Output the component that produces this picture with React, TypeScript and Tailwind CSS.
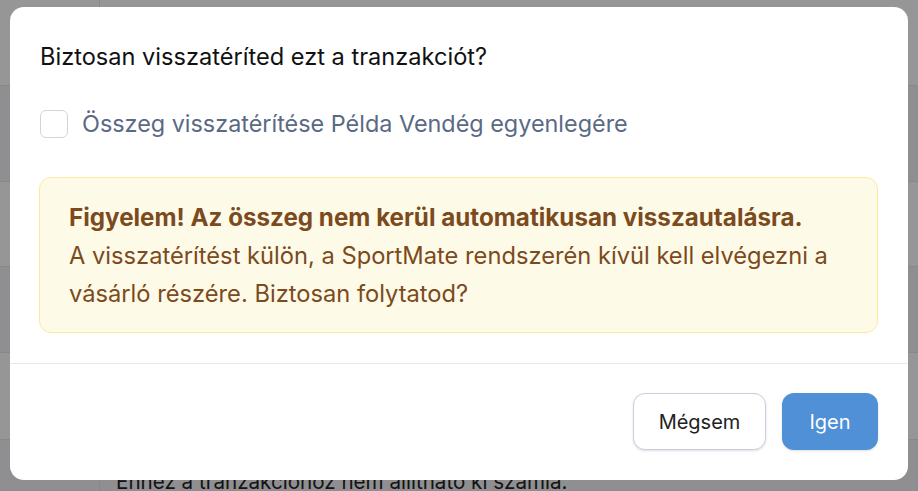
const rows = [
  { h: 'h-[86px]', bg: 'bg-white' },
  { h: 'h-[96px]', bg: 'bg-[#f3f4f6]' },
  { h: 'h-[85px]', bg: 'bg-white' },
  { h: 'h-[86px]', bg: 'bg-[#f3f4f6]' },
  { h: 'h-[87px]', bg: 'bg-white' },
  { h: 'h-[80px]', bg: 'bg-[#f3f4f6]' },
];

export default function App() {
  return (
    <div className="relative w-[918px] h-[491px] overflow-hidden font-['Inter',sans-serif]">
      {/* Page behind the dialog */}
      <div className="flex flex-col">
        {rows.map((row, i) => (
          <div key={i} className={`${row.h} ${row.bg} flex border-b border-[#e5e7eb]`}>
            <div className="w-[100px] border-r border-[#e5e7eb]" />
            <div className="flex-1 pl-4 pt-[27px] text-[20.6px] text-[#222] whitespace-nowrap">
              {i === 5 ? 'Ennez a tranzakcióhoz nem állítható ki számla.' : ''}
            </div>
          </div>
        ))}
      </div>

      {/* Overlay + dialog */}
      <div className="absolute inset-0 bg-black/[0.41] pt-[7px] px-[10px]">
        <div className="w-[898px] h-[473px] bg-white rounded-[14px] flex flex-col">
          <div className="px-[30px] pt-[36px]">
            <h2 className="text-[23.6px] leading-[28px] text-[#111]">Biztosan visszatéríted ezt a tranzakciót?</h2>

            <label className="mt-[39px] flex items-center gap-[14px]">
              <span className="w-[28px] h-[28px] shrink-0 rounded-[6px] border border-[#d1d5db] bg-white" />
              <span className="text-[23.4px] leading-[28px] text-[#5a6a85]">
                Összeg visszatérítése Példa Vendég egyenlegére
              </span>
            </label>

            <div className="mt-[39px] -ml-px rounded-[12px] border border-[#fbeaa0] bg-[#fefae8] px-[29px] pt-[21px] pb-[19px] text-[23.7px] leading-[38px] text-[#7b4a1d] whitespace-nowrap">
              <p className="font-bold text-[24.2px]">Figyelem! Az összeg nem kerül automatikusan visszautalásra.</p>
              <p>
                A visszatérítést külön, a SportMate rendszerén kívül kell elvégezni a
                <br />
                vásárló részére. Biztosan folytatod?
              </p>
            </div>
          </div>

          <div className="mt-[30px] border-t border-[#e5e7eb]" />

          <div className="flex justify-end gap-[16px] px-[30px] pt-[29px]">
            <button className="h-[57px] w-[133px] rounded-[12px] border border-[#c8cfdc] bg-white text-[20px] text-[#222] shadow-sm">
              Mégsem
            </button>
            <button className="h-[57px] w-[96px] rounded-[12px] bg-[#4f90d7] text-[20px] text-white shadow-sm">
              Igen
            </button>
          </div>
        </div>
      </div>
    </div>
  );
}
